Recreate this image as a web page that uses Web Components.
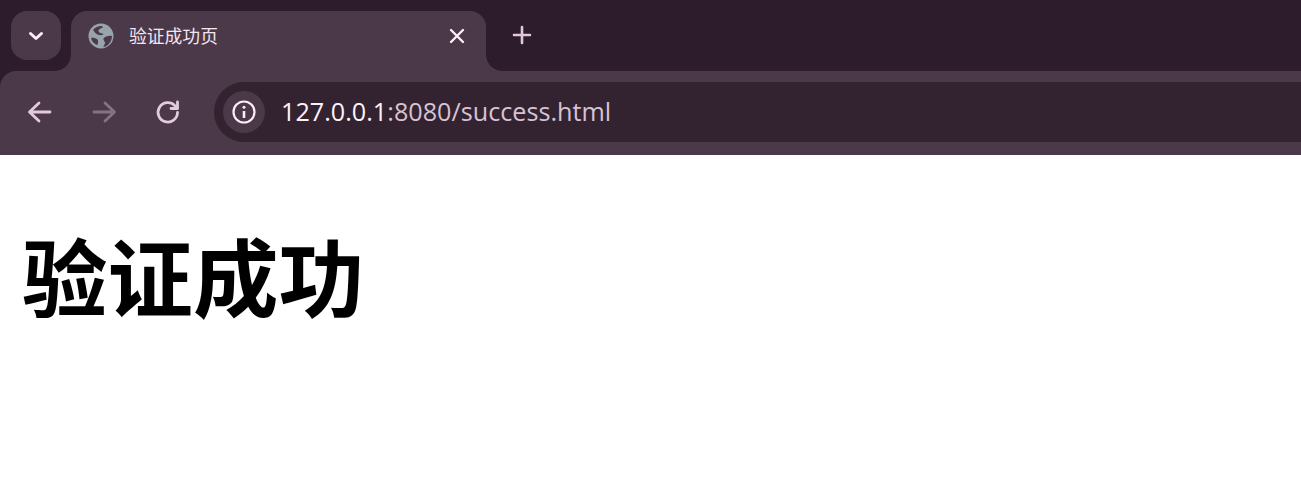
<!DOCTYPE html>
<html lang="zh-CN">
<head>
<meta charset="utf-8">
<title>验证成功页</title>
<style>
  html, body { margin: 0; background: #fff; }
  body { overflow: hidden; height: 493px; font-family: "Noto Sans", "Noto Sans CJK SC", sans-serif; }
</style>
</head>
<body>
<browser-tabstrip title-text="验证成功页"></browser-tabstrip>
<browser-toolbar host-part="127.0.0.1" path-part=":8080/success.html"></browser-toolbar>
<page-heading>验证成功</page-heading>

<script>
class BrowserTabstrip extends HTMLElement {
  connectedCallback() {
    this.attachShadow({ mode: 'open' });
    this.shadowRoot.innerHTML = `
      <style>
        :host {
          display: flex;
          align-items: flex-start;
          height: 60px;
          padding: 11px 0 0 11px;
          background: #2d1c2b;
          color: #f4e6f0;
        }
        .tab-search {
          display: flex;
          align-items: center;
          justify-content: center;
          width: 50px;
          height: 49px;
          border-radius: 16px;
          background: #4b3848;
          margin-right: 10px;
        }
        .tab {
          position: relative;
          display: flex;
          align-items: center;
          box-sizing: border-box;
          width: 415px;
          height: 60px;
          padding: 0 17px 10px 17px;
          background: #4b3848;
          border-radius: 16px 16px 0 0;
        }
        .tab::before, .tab::after {
          content: '';
          position: absolute;
          bottom: 0;
          width: 16px;
          height: 16px;
        }
        .tab::before {
          left: -16px;
          background: radial-gradient(circle at 0 0, transparent 15.5px, #4b3848 16px);
        }
        .tab::after {
          right: -16px;
          background: radial-gradient(circle at 100% 0, transparent 15.5px, #4b3848 16px);
        }
        .favicon { flex: none; width: 26px; height: 26px; margin-right: 15px; }
        .title {
          flex: 1;
          font: 400 17.8px/24px "Noto Sans CJK SC", sans-serif;
          white-space: nowrap;
          margin-top: -2px;
        }
        .close { flex: none; width: 24px; height: 24px; margin-top: -1px; }
        .new-tab { width: 24px; height: 24px; margin: 12px 0 0 24px; color: #e0c8da; }
        svg { display: block; }
      </style>
      <div class="tab-search">
        <svg width="18" height="18" viewBox="0 0 18 18" fill="none" stroke="#fbeef7" stroke-width="3" stroke-linecap="round" stroke-linejoin="round"><path d="M3.500 6.500 9 11.500l5.500-5"/></svg>
      </div>
      <div class="tab">
        <svg class="favicon" viewBox="0 0 26 26">
          <circle cx="13" cy="13" r="12.500" fill="#97a4ab"/>
          <path fill="#4b3848" d="M5 7C7 4.500 10 3 14 3l1 1.500C12 5.500 10 7 10.500 8.500 11.500 10 14 10.500 15.500 11 14 13 10.500 12 8.500 11 7.500 10.200 6.500 9 5 7ZM24 13C20.500 12.500 17 13.500 15.500 15.500 15 16.800 16.500 18 17 19.500 17 21 16 22.500 15 24 20 23.500 23.800 19 24 13ZM3 15C5 14.500 8 15 9.500 16.500 10.500 18 10 20 9.500 22 6 21 3.500 18 3 15Z"/>
        </svg>
        <span class="title">${this.getAttribute('title-text')}</span>
        <svg class="close" viewBox="0 0 24 24" fill="none" stroke="#fbeef7" stroke-width="2.400" stroke-linecap="round"><path d="M6 6l12 12M18 6L6 18"/></svg>
      </div>
      <svg class="new-tab" viewBox="0 0 24 24" fill="none" stroke="currentColor" stroke-width="2.600" stroke-linecap="round"><path d="M12 4v16M4 12h16"/></svg>
    `;
  }
}

class BrowserToolbar extends HTMLElement {
  connectedCallback() {
    this.attachShadow({ mode: 'open' });
    this.shadowRoot.innerHTML = `
      <style>
        :host {
          display: block;
          background: #2d1c2b;
        }
        .bar {
          display: flex;
          align-items: center;
          height: 84px;
          box-sizing: border-box;
          padding: 11px 0 13px 25px;
          background: #4b3848;
          border-radius: 16px 0 0 0;
        }
        .nav { flex: none; width: 30px; height: 30px; margin-right: 34px; }
        .nav.reload { margin-right: 31px; }
        .omnibox {
          flex: 1;
          display: flex;
          align-items: center;
          height: 60px;
          box-sizing: border-box;
          padding-left: 9px;
          background: #332230;
          border-radius: 30px 0 0 30px;
        }
        .info {
          display: flex;
          align-items: center;
          justify-content: center;
          width: 42px;
          height: 42px;
          border-radius: 50%;
          background: #4b3848;
          margin-right: 16px;
        }
        .url {
          font: 400 25.200px/34px "Open Sans", sans-serif;
          color: #d8c3d2;
          white-space: nowrap;
          margin-top: -2px;
        }
        .url b { font-weight: 400; color: #fdf2fa; }
        svg { display: block; }
      </style>
      <div class="bar">
        <svg class="nav" viewBox="0 0 30 30" fill="none" stroke="#e3cbdb" stroke-width="2.800" stroke-linecap="round" stroke-linejoin="round"><path d="M25 15H5M14 6l-9.500 9 9.500 9"/></svg>
        <svg class="nav" viewBox="0 0 30 30" fill="none" stroke="#877283" stroke-width="2.800" stroke-linecap="round" stroke-linejoin="round"><path d="M5 15h20M16 6l9.500 9-9.500 9"/></svg>
        <svg class="nav reload" viewBox="0 0 30 30" fill="none" stroke="#e3cbdb" stroke-width="2.800" stroke-linecap="round" stroke-linejoin="round"><path d="M24.500 15.500a9.700 9.700 0 1 1-2.800-7L24.500 11"/><path d="M24.500 5v6.500H18"/></svg>
        <div class="omnibox">
          <div class="info">
            <svg width="26" height="26" viewBox="0 0 26 26" fill="none" stroke="#fbeef7" stroke-width="2.200"><circle cx="13" cy="13" r="10.500"/><path d="M13 12v7" stroke-width="2.600"/><circle cx="13" cy="8.300" r="1.500" fill="#fbeef7" stroke="none"/></svg>
          </div>
          <span class="url"><b>${this.getAttribute('host-part')}</b>${this.getAttribute('path-part')}</span>
        </div>
      </div>
    `;
  }
}

class PageHeading extends HTMLElement {
  connectedCallback() {
    this.attachShadow({ mode: 'open' });
    this.shadowRoot.innerHTML = `
      <style>
        :host {
          display: block;
          padding: 64px 0 0 22px;
        }
        h1 {
          margin: 0;
          font: 700 85.500px/110px "Noto Sans CJK SC", sans-serif;
          color: #000;
        }
      </style>
      <h1><slot></slot></h1>
    `;
  }
}

customElements.define('browser-tabstrip', BrowserTabstrip);
customElements.define('browser-toolbar', BrowserToolbar);
customElements.define('page-heading', PageHeading);
</script>
</body>
</html>
